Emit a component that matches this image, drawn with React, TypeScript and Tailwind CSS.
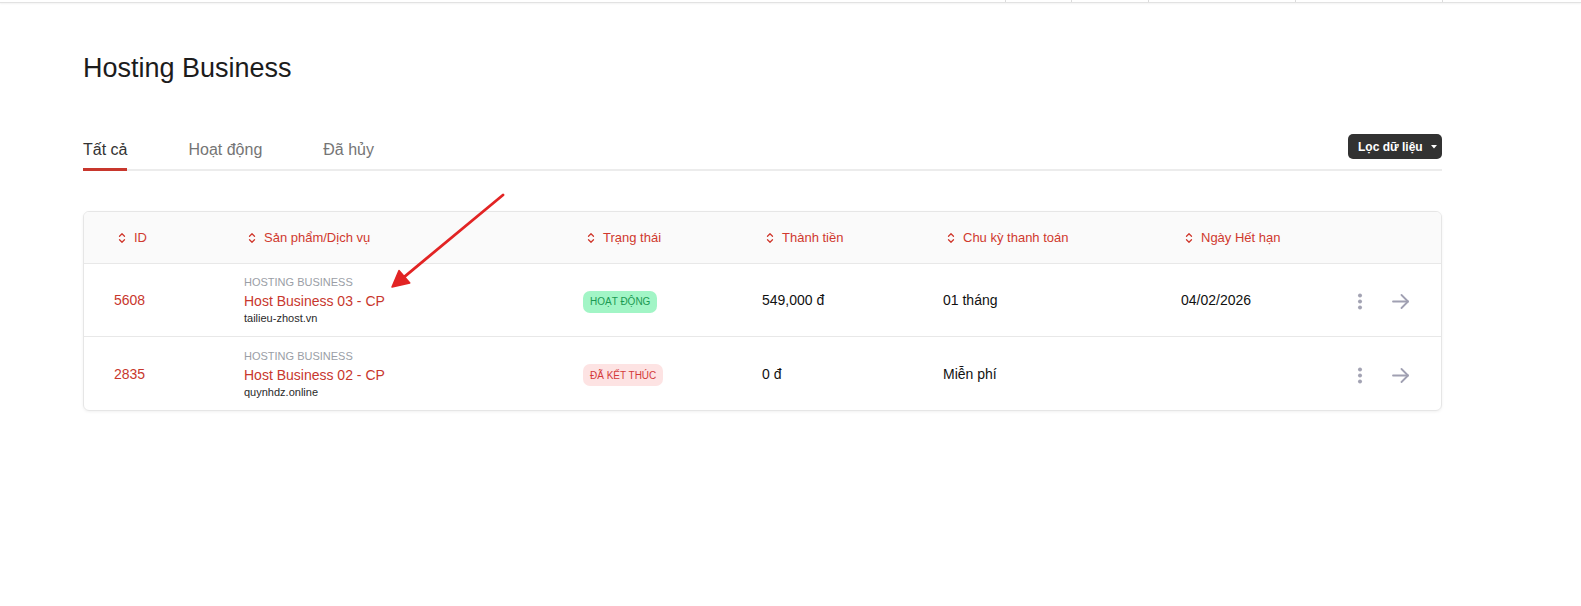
import React from "react";

const SortIcon = () => (
  <svg width="8" height="12" viewBox="0 0 8 12" fill="none" stroke="currentColor" strokeWidth="1.3" strokeLinecap="round" strokeLinejoin="round" className="shrink-0">
    <path d="M1.5 4.3 L4 1.8 L6.5 4.3" />
    <path d="M1.5 7.7 L4 10.2 L6.5 7.7" />
  </svg>
);

const Dots = () => (
  <svg width="20" height="20" viewBox="0 0 20 20" className="shrink-0">
    <circle cx="10" cy="4.5" r="2" fill="#a3a3b3" />
    <circle cx="10" cy="10.5" r="2" fill="#a3a3b3" />
    <circle cx="10" cy="16.5" r="2" fill="#a3a3b3" />
  </svg>
);

const Arrow = () => (
  <svg width="18" height="16" viewBox="0 0 18 16" fill="none" stroke="#a0a0b2" strokeWidth="1.8" strokeLinecap="round" strokeLinejoin="round" className="shrink-0">
    <path d="M1 8.5 H16" />
    <path d="M9.5 2 L16 8.5 L9.5 15" />
  </svg>
);

const headers = ["ID", "Sản phẩm/Dịch vụ", "Trạng thái", "Thành tiền", "Chu kỳ thanh toán", "Ngày Hết hạn"];

type Row = {
  id: string;
  name: string;
  domain: string;
  status: "active" | "ended";
  price: string;
  cycle: string;
  date: string;
};

const rows: Row[] = [
  { id: "5608", name: "Host Business 03 - CP", domain: "tailieu-zhost.vn", status: "active", price: "549,000 đ", cycle: "01 tháng", date: "04/02/2026" },
  { id: "2835", name: "Host Business 02 - CP", domain: "quynhdz.online", status: "ended", price: "0 đ", cycle: "Miễn phí", date: "" },
];

const gridCols = "grid grid-cols-[130px_339px_179px_181px_238px_169px_1fr] pl-[30px]";

export default function App() {
  return (
    <div className="relative w-full h-[606px] bg-white overflow-hidden" style={{ fontFamily: '"Liberation Sans", Arial, sans-serif' }}>
      {/* top nav remnant */}
      <div className="flex h-[3px] border-b border-[#e2e2e2] shadow-[0_1px_2px_rgba(0,0,0,0.05)]">
        <div className="w-[1005px]" />
        <div className="w-[66px] border-l border-[#dcdcdc]" />
        <div className="w-[77px] border-l border-[#dcdcdc]" />
        <div className="w-[147px] border-l border-[#dcdcdc]" />
        <div className="w-[147px] border-l border-[#dcdcdc]" />
        <div className="flex-1 border-l border-[#dcdcdc]" />
      </div>

      <div className="ml-[83px] w-[1359px]">
        <h1 className="mt-[49px] text-[27px] leading-[32px] text-[#1c1c1c] font-normal">Hosting Business</h1>

        <div className="mt-[50px] flex items-end justify-between border-b-2 border-[#ececec]">
          <div className="flex items-end gap-[61px]">
            <div className="pb-[8px] border-b-[3px] border-[#c8372d] -mb-[2px] text-[16px] leading-[20px] text-[#333]">Tất cả</div>
            <div className="pb-[8px] border-b-[3px] border-transparent -mb-[2px] text-[16px] leading-[20px] text-[#757575]">Hoạt động</div>
            <div className="pb-[8px] border-b-[3px] border-transparent -mb-[2px] text-[16px] leading-[20px] text-[#757575]">Đã hủy</div>
          </div>
          <button className="mb-[10px] h-[25px] w-[94px] flex items-center gap-[8px] pl-[10px] rounded-[5px] bg-[#323232] text-white text-[12px] font-bold">
            <span>Lọc dữ liệu</span>
            <svg width="6" height="4" viewBox="0 0 6 4"><path d="M0 0 H6 L3 3.5 Z" fill="#fff" /></svg>
          </button>
        </div>

        <div className="mt-[40px] border border-[#e6e6e6] rounded-[6px] shadow-[0_1px_3px_rgba(0,0,0,0.06)] overflow-hidden">
          <div className={`${gridCols} h-[52px] items-center bg-[#fafafa] border-b border-[#e8e8e8]`}>
            {headers.map((h) => (
              <div key={h} className="pl-[4px] flex items-center gap-[8px] text-[13px] text-[#d0392e]">
                <SortIcon />
                <span>{h}</span>
              </div>
            ))}
            <div />
          </div>
          {rows.map((r, i) => (
            <div key={r.id} className={`${gridCols} h-[73px] items-center ${i < rows.length - 1 ? "border-b border-[#e8e8e8]" : ""}`}>
              <div className="text-[14px] text-[#c8372d] pt-[1px]">{r.id}</div>
              <div className="flex flex-col">
                <span className="text-[11px] leading-[14px] text-[#9a9ea6] font-medium">HOSTING BUSINESS</span>
                <span className="mt-[3px] text-[14px] leading-[18px] text-[#c8372d]">{r.name}</span>
                <span className="mt-[1px] text-[11px] leading-[14px] text-[#2a2a2a]">{r.domain}</span>
              </div>
              <div className="pt-[1px]">
                {r.status === "active" ? (
                  <span className="inline-flex items-center h-[22px] px-[7px] rounded-[7px] bg-[#a2f5c6] text-[10px] text-[#1a9a52]">HOẠT ĐỘNG</span>
                ) : (
                  <span className="inline-flex items-center h-[22px] px-[7px] rounded-[7px] bg-[#fde3e3] text-[10px] text-[#d33a3a]">ĐÃ KẾT THÚC</span>
                )}
              </div>
              <div className="text-[14px] text-[#111] pt-[1px]">{r.price}</div>
              <div className="text-[14px] text-[#111] pt-[1px]">{r.cycle}</div>
              <div className="text-[14px] text-[#111] pt-[1px]">{r.date}</div>
              <div className="flex items-center gap-[22px] pt-[2px]">
                <Dots />
                <Arrow />
              </div>
            </div>
          ))}
        </div>
      </div>

      {/* annotation arrow */}
      <svg className="absolute left-[380px] top-[185px]" width="135" height="110" viewBox="0 0 135 110" fill="none">
        <path d="M123 10 L24.3 91.8" stroke="#e22424" strokeWidth="2.8" strokeLinecap="round" />
        <path d="M12 102 L29.8 98 L19 85.5 Z" fill="#e22424" stroke="#e22424" strokeWidth="1.5" strokeLinejoin="round" />
      </svg>
    </div>
  );
}
